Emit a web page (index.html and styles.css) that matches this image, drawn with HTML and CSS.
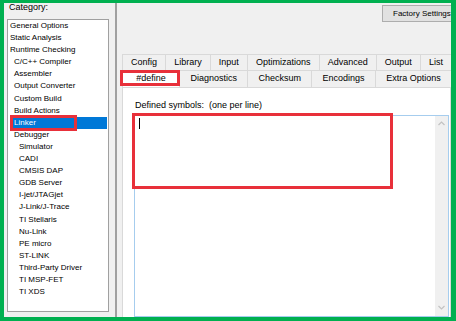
FILE: index.html
```html
<!DOCTYPE html>
<html lang="en">
<head>
    <meta charset="UTF-8">
    <title>Options for node</title>
    <link rel="stylesheet" href="styles.css">
</head>
<body>
<div class="frame">
  <div class="window">
    <div class="sidebar">
      <div class="caption">Category:</div>
      <ul class="tree">
        <li class="l0">General Options</li>
        <li class="l0">Static Analysis</li>
        <li class="l0">Runtime Checking</li>
        <li class="l1">C/C++ Compiler</li>
        <li class="l1">Assembler</li>
        <li class="l1">Output Converter</li>
        <li class="l1">Custom Build</li>
        <li class="l1">Build Actions</li>
        <li class="l1 sel">Linker</li>
        <li class="l1">Debugger</li>
        <li class="l2">Simulator</li>
        <li class="l2">CADI</li>
        <li class="l2">CMSIS DAP</li>
        <li class="l2">GDB Server</li>
        <li class="l2">I-jet/JTAGjet</li>
        <li class="l2">J-Link/J-Trace</li>
        <li class="l2">TI Stellaris</li>
        <li class="l2">Nu-Link</li>
        <li class="l2">PE micro</li>
        <li class="l2">ST-LINK</li>
        <li class="l2">Third-Party Driver</li>
        <li class="l2">TI MSP-FET</li>
        <li class="l2">TI XDS</li>
      </ul>
    </div>

    <div class="main">
      <div class="toolbar">
        <button class="factory">Factory Settings</button>
      </div>

      <div class="tabrow back">
        <div class="tab">Config</div>
        <div class="tab">Library</div>
        <div class="tab">Input</div>
        <div class="tab">Optimizations</div>
        <div class="tab">Advanced</div>
        <div class="tab">Output</div>
        <div class="tab">List</div>
      </div>
      <div class="tabrow front">
        <div class="tab current">#define</div>
        <div class="tab">Diagnostics</div>
        <div class="tab">Checksum</div>
        <div class="tab">Encodings</div>
        <div class="tab">Extra Options</div>
      </div>

      <div class="page">
        <div class="label">Defined symbols:&nbsp; (one per line)</div>
        <div class="editor">
          <span class="caret"></span>
          <div class="vscroll">
            <svg width="7" height="5" viewBox="0 0 7 5"><polyline points="0.5,4 3.5,1 6.5,4" fill="none" stroke="#c2c2c2" stroke-width="1.2"/></svg>
            <svg width="7" height="5" viewBox="0 0 7 5"><polyline points="0.5,1 3.5,4 6.5,1" fill="none" stroke="#c2c2c2" stroke-width="1.2"/></svg>
          </div>
        </div>
      </div>
    </div>
  </div>
</div>
</body>
</html>
```

FILE: styles.css
```css
*, *:before, *:after {
  box-sizing: border-box;
}
body {
  margin: 0;
  background: #00b050;
  font-family: "Liberation Sans", Arial, sans-serif;
  color: #000;
}
.frame {
  width: 456px;
  height: 321px;
  padding: 3px 5px 4px 4px;
}
.window {
  display: flex;
  height: 314px;
  background: #f0f0f0;
  overflow: hidden;
}

/* left: category tree */
.sidebar {
  width: 111px;
  flex: none;
  display: flex;
  flex-direction: column;
}
.caption {
  height: 16px;
  padding-left: 5px;
  font-size: 9px;
  line-height: 9px;
}
.tree {
  list-style: none;
  margin: 0 6px 5px 3px;
  padding: 0;
  flex: 1;
  background: #fff;
  border: 1px solid #a0a0a0;
  font-size: 8px;
  line-height: 12.1px;
}
.tree li {
  padding-left: 1px;
  white-space: nowrap;
}
.l0 { margin-left: 1px; }
.l1 { margin-left: 5px; }
.l2 { margin-left: 10px; }
.tree .sel {
  position: relative;
  margin-right: 1px;
  background: #0078d7;
  color: #fff;
}
.tree .sel:after {
  content: "";
  position: absolute;
  left: -3px;
  top: -2px;
  width: 67px;
  height: 16px;
  border: 3px solid #e8303a;
}

/* right: options pane */
.main {
  flex: 1;
  min-width: 0;
  display: flex;
  flex-direction: column;
  border-left: 2px solid #a0a0a0;
  padding-left: 5px;
}
.toolbar {
  height: 51px;
  flex: none;
  display: flex;
  justify-content: flex-end;
  align-items: flex-start;
}
.factory {
  flex: none;
  width: 72px;
  height: 17px;
  margin: 2px -3px 0 0;
  padding: 0 0 0 10px;
  text-align: left;
  background: #e1e1e1;
  border: 1px solid #adadad;
  font: 8px "Liberation Sans", Arial, sans-serif;
  color: #000;
}

.tabrow {
  display: flex;
  flex: none;
  font-size: 9px;
}
.back { height: 16px; }
.front { height: 17px; }
.tab {
  flex: 1 1 auto;
  padding: 0 6px;
  text-align: center;
  white-space: nowrap;
  border-left: 1px solid #d9d9d9;
  border-top: 1px solid #d9d9d9;
  line-height: 15px;
}
.tab.current {
  position: relative;
  padding: 0 9px;
  background: #fff;
}
.tab.current:after {
  content: "";
  position: absolute;
  left: -3px;
  top: -1px;
  width: 60px;
  height: 16px;
  border: 3px solid #e8303a;
}

.page {
  flex: 1;
  background: #fff;
  border: 1px solid #d9d9d9;
  padding: 12px 1px 0 11px;
}
.label {
  font-size: 9px;
  line-height: 11px;
  padding-left: 1px;
  margin-bottom: 4px;
  white-space: pre;
}
.editor {
  position: relative;
  display: flex;
  height: 202px;
  border: 1px solid #a6cdee;
  background: #fff;
}
.editor:before {
  content: "";
  position: absolute;
  left: -3px;
  top: -3px;
  width: 261px;
  height: 76px;
  border: 3px solid #e8303a;
}
.caret {
  width: 1px;
  height: 11px;
  margin: 2px 0 0 4px;
  background: #000;
}
.vscroll {
  margin-left: auto;
  width: 13px;
  background: #f0f0f0;
  display: flex;
  flex-direction: column;
  justify-content: space-between;
  align-items: center;
  padding: 5px 0 6px;
}
```
